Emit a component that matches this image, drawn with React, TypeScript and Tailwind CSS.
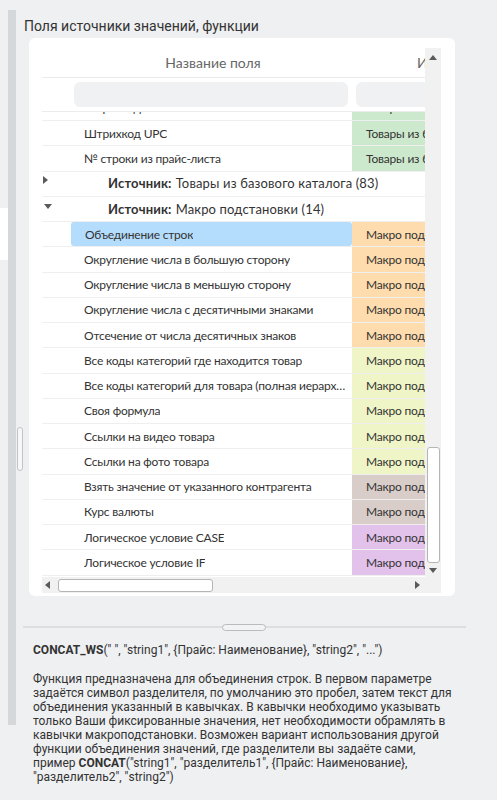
import React from 'react';

type Item = { name: string; source: string; color: string; selected?: boolean };

const SRC_CATALOG = 'Товары из базового каталога';
const SRC_MACRO = 'Макро подстановки';

const colorClass: Record<string, string> = {
  green: 'bg-[#cde9cd]',
  orange: 'bg-[#ffdcad]',
  yellow: 'bg-[#eff5c6]',
  tan: 'bg-[#d9cdc9]',
  purple: 'bg-[#e2c1ea]',
};

const catalogItems: Item[] = [
  { name: 'Штрихкод EAN', source: SRC_CATALOG, color: 'green' },
  { name: 'Штрихкод UPC', source: SRC_CATALOG, color: 'green' },
  { name: '№ строки из прайс-листа', source: SRC_CATALOG, color: 'green' },
];

const macroItems: Item[] = [
  { name: 'Объединение строк', source: SRC_MACRO, color: 'orange', selected: true },
  { name: 'Округление числа в большую сторону', source: SRC_MACRO, color: 'orange' },
  { name: 'Округление числа в меньшую сторону', source: SRC_MACRO, color: 'orange' },
  { name: 'Округление числа с десятичными знаками', source: SRC_MACRO, color: 'orange' },
  { name: 'Отсечение от числа десятичных знаков', source: SRC_MACRO, color: 'orange' },
  { name: 'Все коды категорий где находится товар', source: SRC_MACRO, color: 'yellow' },
  { name: 'Все коды категорий для товара (полная иерархия)', source: SRC_MACRO, color: 'yellow' },
  { name: 'Своя формула', source: SRC_MACRO, color: 'yellow' },
  { name: 'Ссылки на видео товара', source: SRC_MACRO, color: 'yellow' },
  { name: 'Ссылки на фото товара', source: SRC_MACRO, color: 'yellow' },
  { name: 'Взять значение от указанного контрагента', source: SRC_MACRO, color: 'tan' },
  { name: 'Курс валюты', source: SRC_MACRO, color: 'tan' },
  { name: 'Логическое условие CASE', source: SRC_MACRO, color: 'purple' },
  { name: 'Логическое условие IF', source: SRC_MACRO, color: 'purple' },
];

function Tri({ dir }: { dir: 'up' | 'down' | 'left' | 'right' }) {
  const pts = {
    up: '0,5 4,0 8,5',
    down: '0,0 8,0 4,5',
    left: '5,0 5,8 0,4',
    right: '0,0 5,4 0,8',
  }[dir];
  const vertical = dir === 'up' || dir === 'down';
  return (
    <svg width={vertical ? 8 : 5} height={vertical ? 5 : 8} viewBox={vertical ? '0 0 8 5' : '0 0 5 8'}>
      <polygon points={pts} fill="#5a5a5a" />
    </svg>
  );
}

function ItemRow({ item, first }: { item: Item; first?: boolean }) {
  return (
    <div
      className={`flex h-[25.25px] shrink-0 border-b border-[#efefef] text-[12px] tracking-[-0.2px] ${
        first ? '-mt-[16.25px]' : ''
      }`}
    >
      <div className="w-[28px] shrink-0" />
      <div
        className={`shrink-0 flex items-center pl-[14px] pr-[4px] pt-[1px] ${
          item.selected ? 'bg-[#b4ddfd] rounded-[3px] ml-[1px] w-[281px] pl-[13px]' : 'w-[282px]'
        }`}
      >
        <span className="truncate">{item.name}</span>
      </div>
      <div className={`w-[160px] shrink-0 flex items-center pl-[14px] pt-[1px] whitespace-nowrap ${colorClass[item.color]}`}>
        {item.source}
      </div>
    </div>
  );
}

function GroupRow({ label, open }: { label: string; open?: boolean }) {
  return (
    <div className="flex h-[25.25px] shrink-0 border-b border-[#efefef] text-[13px] tracking-[0.15px]">
      <div className={`w-[28px] shrink-0 flex ${open ? 'pt-[7px] pl-[2px]' : 'pt-[4px] pl-[1px]'}`}>
        <Tri dir={open ? 'down' : 'right'} />
      </div>
      <div className="flex items-center pl-[38px] pt-[1px] whitespace-nowrap">
        <span className="font-bold">Источник:</span>
        <span className="ml-[4px]">{label}</span>
      </div>
    </div>
  );
}

export default function App() {
  return (
    <div className="w-[497px] h-[800px] bg-[#eff0f2] flex overflow-hidden font-['Roboto',sans-serif] text-[#333]">
      {/* left edge strips */}
      <div className="w-[8px] shrink-0">
        <div className="mt-[208px] h-[52px] bg-white" />
      </div>
      <div className="w-[8px] shrink-0 mt-[10px] h-[715px] bg-[#d5d8db]" />
      <div className="w-[7px] shrink-0">
        <div className="mt-[427px] ml-[1px] w-[6px] h-[44px] rounded-[3px] border border-[#c4c4c4] bg-[#f7f7f7]" />
      </div>

      {/* main column */}
      <div className="w-[443px] shrink-0 flex flex-col">
        <div className="h-[38px] pt-[17px] pl-[1px] text-[14px] leading-[18px] text-[#333]">
          Поля источники значений, функции
        </div>

        {/* card */}
        <div className="ml-[6px] w-[426px] h-[558px] bg-white rounded-[6px] pt-[10px] pl-[13px]">
          <div className="w-[399px] flex flex-col font-['Lato',sans-serif] text-[#333]">
            <div className="flex h-[529px]">
              <div className="w-[383px] overflow-hidden flex flex-col">
                {/* header */}
                <div className="flex h-[30px] shrink-0 border-b border-[#ececec] text-[14px] text-[#666]">
                  <div className="w-[28px] shrink-0" />
                  <div className="w-[282px] shrink-0 flex items-center justify-center pl-[4px]">Название поля</div>
                  <div className="w-[200px] shrink-0 flex items-center pl-[65px] whitespace-nowrap">Источник значения</div>
                </div>
                {/* filters */}
                <div className="flex h-[34px] shrink-0 border-b border-[#ececec] items-center">
                  <div className="w-[28px] shrink-0" />
                  <div className="w-[282px] shrink-0 px-[4px]">
                    <div className="h-[25px] rounded-[6px] bg-[#f0f1f3]" />
                  </div>
                  <div className="w-[160px] shrink-0 px-[4px]">
                    <div className="h-[25px] rounded-[6px] bg-[#f0f1f3]" />
                  </div>
                </div>
                {/* body */}
                <div className="h-[465px] overflow-hidden flex flex-col">
                  {catalogItems.map((it, i) => (
                    <ItemRow key={it.name} item={it} first={i === 0} />
                  ))}
                  <GroupRow label="Товары из базового каталога (83)" />
                  <GroupRow label="Макро подстановки (14)" open />
                  {macroItems.map((it) => (
                    <ItemRow key={it.name} item={it} />
                  ))}
                </div>
              </div>
              {/* vertical scrollbar */}
              <div className="w-[16px] bg-[#f1f1f1] flex flex-col items-center">
                <div className="mt-[7px]">
                  <Tri dir="up" />
                </div>
                <div className="mt-[387px] w-[13px] h-[116px] rounded-[3px] border border-[#b5b5b5] bg-white" />
                <div className="mt-[5px]">
                  <Tri dir="down" />
                </div>
              </div>
            </div>
            {/* horizontal scrollbar */}
            <div className="h-[16px] bg-[#f1f1f1] flex items-center">
              <div className="ml-[3px]">
                <Tri dir="left" />
              </div>
              <div className="ml-[8px] w-[155px] h-[13px] rounded-[3px] border border-[#b5b5b5] bg-white" />
              <div className="ml-[202px]">
                <Tri dir="right" />
              </div>
            </div>
          </div>
        </div>

        {/* splitter */}
        <div className="mt-[28px] h-[7px] relative flex items-center justify-center">
          <div className="absolute left-0 right-0 top-[2px] h-[2px] bg-[#dcdee1]" />
          <div className="relative ml-[-1px] w-[44px] h-[7px] rounded-full border border-[#b9bcbf] bg-[#f2f3f5]" />
        </div>

        {/* description */}
        <div className="pl-[10px] pt-[12px] text-[12px] leading-[14px] text-[#333]">
          <div>
            <span className="font-bold">CONCAT_WS</span>(" ", "string1", {'{'}Прайс: Наименование{'}'}, "string2", "...")
          </div>
          <p className="mt-[15px]">
            Функция предназначена для объединения строк. В первом параметре
            <br />
            задаётся символ разделителя, по умолчанию это пробел, затем текст для
            <br />
            объединения указанный в кавычках. В кавычки необходимо указывать
            <br />
            только Ваши фиксированные значения, нет необходимости обрамлять в
            <br />
            кавычки макроподстановки. Возможен вариант использования другой
            <br />
            функции объединения значений, где разделители вы задаёте сами,
            <br />
            пример <span className="font-bold">CONCAT</span>("string1", "разделитель1", {'{'}Прайс: Наименование{'}'},
            <br />
            "разделитель2", "string2")
          </p>
        </div>
      </div>
    </div>
  );
}
